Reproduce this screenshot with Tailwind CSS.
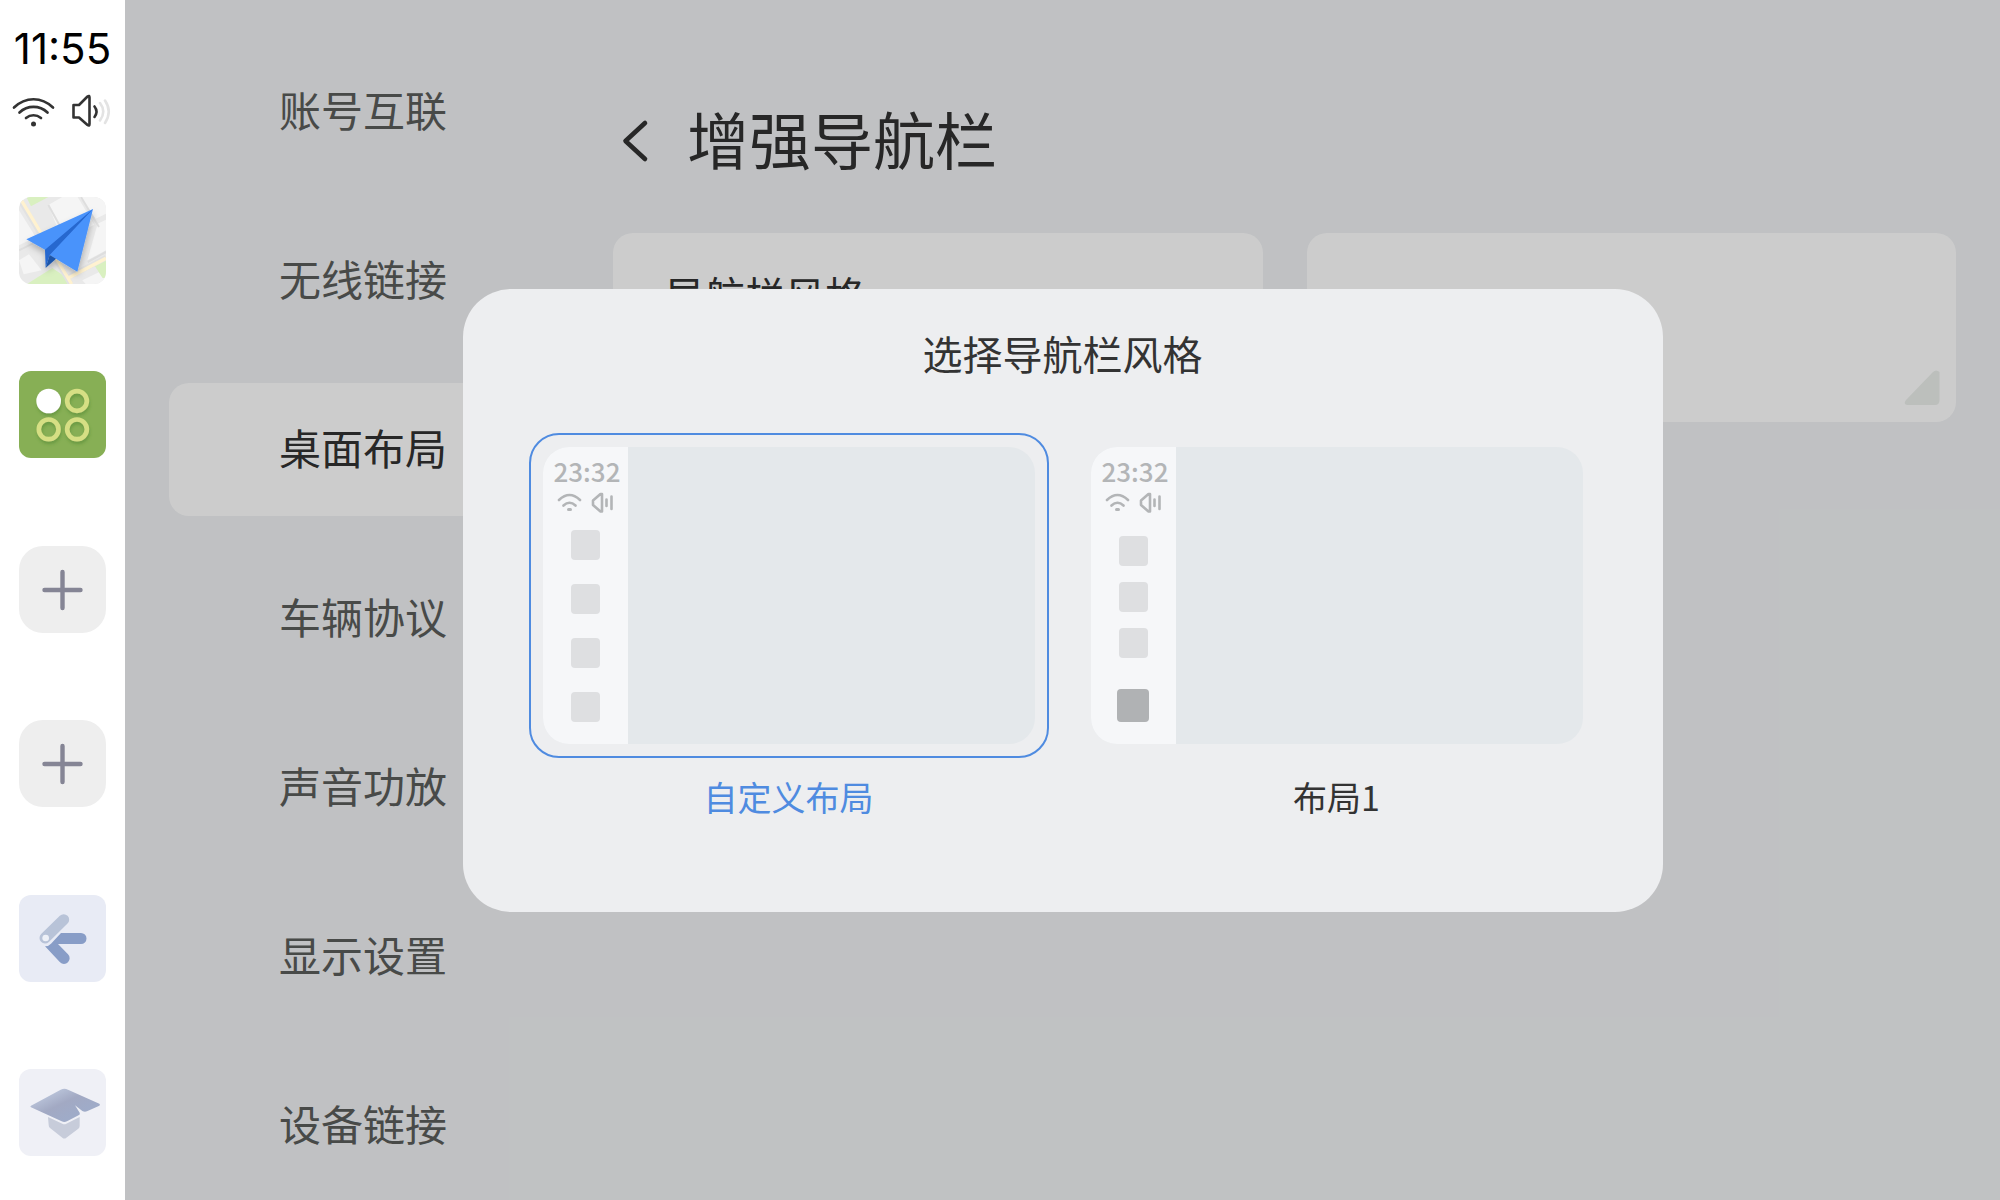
<!DOCTYPE html>
<html lang="zh-CN">

<head>
    <meta charset="UTF-8">
    <meta name="viewport" content="width=device-width, initial-scale=1.0">
    <title>增强导航栏</title>
    <script src="https://cdn.jsdelivr.net/npm/@tailwindcss/browser@4"></script>
</head>

<body class="flex h-screen overflow-hidden bg-[#f0f2f4] font-['Noto_Sans_CJK_SC',sans-serif]">
    <!-- Navigation bar -->
    <aside class="flex w-[125px] shrink-0 flex-col items-center bg-white pb-11">
        <time class="mt-[25px] h-12 font-['Inter',sans-serif] text-[42px] leading-[48px] text-black">11:55</time>
        <div class="mt-5 mb-[68px] flex h-9 items-center gap-4 pr-1">
            <svg class="h-9 w-11" viewBox="0 0 44 36" fill="none" stroke="#333" stroke-width="2.7" stroke-linecap="round">
                <path d="M3 14.5C14.5 3.5 30.5 3.5 42 14.5M8.5 19.5C16.5 12 28.5 12 36.5 19.5M15 25C19.5 21.3 25.5 21.3 30 25"></path>
                <circle cx="22.5" cy="31" r="2.5" fill="#333" stroke="none"></circle>
            </svg>
            <svg class="h-9 w-10" viewBox="0 0 40 36" fill="none" stroke-width="2.6" stroke-linecap="round" stroke-linejoin="round">
                <path stroke="#333" d="M2.5 12H8L16.5 3.5Q18.5 2 18.5 4.500V31Q18.5 33.5 16.5 32L8 24.5H2.5ZM23.5 13.5Q27.5 18.5 23.5 24"></path>
                <path stroke="#e3e3e3" d="M29 10Q35.5 18.5 29 27.5M34 7.5Q41.5 18.5 34 30"></path>
            </svg>
        </div>

        <nav class="flex min-h-0 flex-1 flex-col justify-between">
            <button class="block size-[87px] overflow-hidden rounded-xl" aria-label="地图">
                <svg class="size-full" viewBox="0 0 261 261">
                    <defs>
                        <filter id="planeShadow" x="-20%" y="-20%" width="150%" height="150%">
                            <feDropShadow dx="2" dy="12" stdDeviation="9" flood-color="#000" flood-opacity="0.25"></feDropShadow>
                        </filter>
                    </defs>
                    <rect width="261" height="261" fill="#e9e9e9"></rect>
                    <path fill="#f5f5f5" d="M88 24L130 0H176L226 83L130 130ZM182 0H261V50L230 65ZM0 40L50 120L0 145ZM0 190L30 172L68 220L14 232ZM236 80L261 68V160L205 190ZM190 250L261 215V261H200Z"></path>
                    <path fill="none" stroke="#dedede" stroke-width="6" d="M186 0L240 90M88 24L130 100M0 160L60 130M206 195L261 165"></path>
                    <path fill="#d9f0c0" d="M22 0H88L36 28ZM24 261L100 213L140 240L145 261ZM228 208L261 190V245L250 242Z"></path>
                    <path fill="none" stroke="#e2e2e2" stroke-width="16" d="M2 8L155 261M148 240L261 182"></path>
                    <path fill="none" stroke="#fff2d0" stroke-width="10" d="M6 8L158 261M148 243L261 184"></path>
                    <g filter="url(#planeShadow)">
                        <path fill="#4a93fb" d="M222 36L22 127L78 158L92 174L175 224Z"></path>
                        <path fill="#2667cf" d="M222 36L78 158L80 213L92 174Z"></path>
                        <path fill="#1b54a9" d="M92 174L80 213L111 185Z"></path>
                    </g>
                </svg>
            </button>

            <button class="block size-[87px] overflow-hidden rounded-xl bg-[#87af55]" aria-label="应用">
                <svg class="size-full" viewBox="0 0 261 261" fill="none">
                    <defs>
                        <filter id="dotShadow" x="-20%" y="-20%" width="150%" height="150%">
                            <feDropShadow dx="2" dy="8" stdDeviation="5" flood-color="#3f7a20" flood-opacity="0.4"></feDropShadow>
                        </filter>
                    </defs>
                    <g filter="url(#dotShadow)">
                        <circle cx="89" cy="90" r="37" fill="#fff"></circle>
                        <g stroke="#d6df84" stroke-width="14">
                            <circle cx="174" cy="90" r="29.5"></circle>
                            <circle cx="89" cy="175" r="29.5"></circle>
                            <circle cx="174" cy="175" r="29.5"></circle>
                        </g>
                    </g>
                </svg>
            </button>

            <button class="block size-[87px] rounded-3xl bg-[#eee]" aria-label="添加">
                <svg class="size-full" viewBox="0 0 87 87" stroke="#858595" stroke-width="4.4" stroke-linecap="round">
                    <path d="M43.5 26V62M25.5 44H61.5"></path>
                </svg>
            </button>

            <button class="block size-[87px] rounded-3xl bg-[#eee]" aria-label="添加">
                <svg class="size-full" viewBox="0 0 87 87" stroke="#858595" stroke-width="4.4" stroke-linecap="round">
                    <path d="M43.5 26V62M25.5 44H61.5"></path>
                </svg>
            </button>

            <button class="block size-[87px] rounded-xl bg-[#e8ebf5]" aria-label="返回桌面">
                <svg class="size-full" viewBox="0 0 261 261">
                    <path fill="none" stroke="#b8c3d8" stroke-width="33" stroke-linecap="round" d="M78 129L134 74"></path>
                    <circle cx="80" cy="129" r="10" fill="#eef1f8"></circle>
                    <path fill="#889dc7" d="M126 114H186A16.5 16.5 0 0 1 186 147H117L147 178A16.5 16.5 0 0 1 123 202L78 154Q89 154 96 146Z"></path>
                </svg>
            </button>

            <button class="block size-[87px] rounded-xl bg-[#eff0f6]" aria-label="教程">
                <svg class="size-full" viewBox="0 0 261 261">
                    <defs>
                        <linearGradient id="capFill" x1="0.2" y1="0.2" x2="0.7" y2="0.7">
                            <stop offset="0" stop-color="#b9c3d9"></stop>
                            <stop offset="0.5" stop-color="#a2a9c3"></stop>
                            <stop offset="1" stop-color="#9fabc8"></stop>
                        </linearGradient>
                    </defs>
                    <path fill="#c7ccda" d="M87 144L130 164Q136 168 142 164L182 144V170Q182 176 178 179L142 206Q136 211 130 206L94 178Q89 175 89 168Z"></path>
                    <path fill="url(#capFill)" d="M36 110Q32 113 36 115L128 157Q136 161 144 157L180 138Q184 136 182 131L168 109L190 126Q197 130 204 127L241 110Q245 107 241 104L147 62Q136 57 125 62Z"></path>
                </svg>
            </button>
        </nav>
    </aside>

    <!-- Settings page -->
    <main class="relative flex min-w-0 flex-1 pr-11 pl-11">
        <nav class="mt-[45px] flex w-[388px] shrink-0 flex-col gap-9 text-[42px] text-[#5b5d5b]">
            <a href="#" class="flex h-[133px] shrink-0 items-center justify-center rounded-[20px] pb-1.5">账号互联</a>
            <a href="#" class="flex h-[133px] shrink-0 items-center justify-center rounded-[20px] pb-1.5">无线链接</a>
            <a href="#" class="flex h-[133px] shrink-0 items-center justify-center rounded-[20px] bg-white pb-1.5 text-[#313131]" aria-current="page">桌面布局</a>
            <a href="#" class="flex h-[133px] shrink-0 items-center justify-center rounded-[20px] pb-1.5">车辆协议</a>
            <a href="#" class="flex h-[133px] shrink-0 items-center justify-center rounded-[20px] pb-1.5">声音功放</a>
            <a href="#" class="flex h-[133px] shrink-0 items-center justify-center rounded-[20px] pb-1.5">显示设置</a>
            <a href="#" class="flex h-[133px] shrink-0 items-center justify-center rounded-[20px] pb-1.5">设备链接</a>
        </nav>

        <section class="ml-14 flex min-w-0 flex-1 flex-col">
            <header class="mt-24 flex h-[90px] items-center gap-7 text-[#313131]">
                <button class="flex h-12 w-[46px] items-center justify-center" aria-label="返回">
                    <svg class="h-12 w-8" viewBox="0 0 32 48" fill="none" stroke="currentColor" stroke-width="4.6" stroke-linecap="round" stroke-linejoin="round">
                        <path d="M25 6L5.5 24L25 42"></path>
                    </svg>
                </button>
                <h1 class="pb-1.5 text-[62px] leading-[90px]">增强导航栏</h1>
            </header>
            <div class="mt-[47px] grid grid-cols-2 gap-11">
                <button class="flex h-[189px] items-start rounded-[20px] bg-white px-13 pt-8 text-left text-[40px] leading-[58px] text-[#313131]">导航栏风格</button>
                <button class="flex h-[189px] items-end justify-end rounded-[20px] bg-white p-4" aria-label="更多">
                    <svg class="h-9 w-9" viewBox="0 0 36 36" fill="#ecefec">
                        <path d="M29 2Q32 -1 35.5 2V30Q35.5 35 31 35H3Q-1 34 2 30Z"></path>
                    </svg>
                </button>
            </div>
        </section>

        <!-- Style picker dialog -->
        <div class="absolute inset-0 flex items-center justify-center bg-black/20">
            <div role="dialog" aria-labelledby="dialogTitle" class="w-full max-w-[1200px] rounded-[48px] bg-[#edeef0] px-[66px] pt-[34px] pb-[90px] text-[#333]">
                <h2 id="dialogTitle" class="text-center text-[40px] leading-[60px]">选择导航栏风格</h2>
                <div class="mt-[50px] grid grid-cols-2 gap-7">
                    <label class="block text-center text-[34px] leading-[50px]">
                        <input type="radio" name="navStyle" class="peer sr-only" checked>
                        <span class="block rounded-[30px] border-2 border-transparent p-3 peer-checked:border-[#4f8be0]">
                            <span class="flex h-[297px] overflow-hidden rounded-[26px] bg-[#e4e8eb]">
                                <span class="flex w-[85px] flex-col items-center bg-[#f6f7f9] pt-2">
                                    <span class="ml-1 text-[26px] leading-8 font-medium text-[#b3b5b7]">23:32</span>
                                    <svg class="mt-1 ml-1 h-6 w-[60px]" viewBox="0 0 60 24" fill="none" stroke="#b3b5b7" stroke-width="2.6" stroke-linecap="round" stroke-linejoin="round">
                                        <path d="M2 9Q12.5 -1 23 9M6.5 14.5Q12.5 9 18.5 14.5"></path>
                                        <path stroke-width="3" d="M11.500 18.500H13.500"></path>
                                        <path d="M45 3V20.5H43.500L36 14V9.5L43.5 3ZM49.5 8.5V15M54.5 5.500V18"></path>
                                    </svg>
                                    <span class="mt-[15px] flex flex-col gap-6">
                                        <span class="h-[30px] w-[29px] rounded bg-[#dedfe1]"></span>
                                        <span class="h-[30px] w-[29px] rounded bg-[#dedfe1]"></span>
                                        <span class="h-[30px] w-[29px] rounded bg-[#dedfe1]"></span>
                                        <span class="h-[30px] w-[29px] rounded bg-[#dedfe1]"></span>
                                    </span>
                                </span>
                            </span>
                        </span>
                        <span class="mt-3.5 block peer-checked:text-[#4f8be0]">自定义布局</span>
                    </label>
                    <label class="block text-center text-[34px] leading-[50px]">
                        <input type="radio" name="navStyle" class="peer sr-only">
                        <span class="block rounded-[30px] border-2 border-transparent p-3 peer-checked:border-[#4f8be0]">
                            <span class="flex h-[297px] overflow-hidden rounded-[26px] bg-[#e4e8eb]">
                                <span class="flex w-[85px] flex-col items-center bg-[#f6f7f9] pt-2">
                                    <span class="ml-1 text-[26px] leading-8 font-medium text-[#b3b5b7]">23:32</span>
                                    <svg class="mt-1 ml-1 h-6 w-[60px]" viewBox="0 0 60 24" fill="none" stroke="#b3b5b7" stroke-width="2.6" stroke-linecap="round" stroke-linejoin="round">
                                        <path d="M2 9Q12.5 -1 23 9M6.5 14.5Q12.5 9 18.5 14.5"></path>
                                        <path stroke-width="3" d="M11.500 18.500H13.500"></path>
                                        <path d="M45 3V20.5H43.500L36 14V9.5L43.5 3ZM49.5 8.5V15M54.5 5.500V18"></path>
                                    </svg>
                                    <span class="mt-[21px] flex flex-col items-center gap-4">
                                        <span class="h-[30px] w-[29px] rounded bg-[#dedfe1]"></span>
                                        <span class="h-[30px] w-[29px] rounded bg-[#dedfe1]"></span>
                                        <span class="h-[30px] w-[29px] rounded bg-[#dedfe1]"></span>
                                    </span>
                                    <span class="mt-[31px] h-[33px] w-8 rounded bg-[#b0b2b4]"></span>
                                </span>
                            </span>
                        </span>
                        <span class="mt-3.5 block peer-checked:text-[#4f8be0]">布局1</span>
                    </label>
                </div>
            </div>
        </div>
    </main>
</body>

</html>
